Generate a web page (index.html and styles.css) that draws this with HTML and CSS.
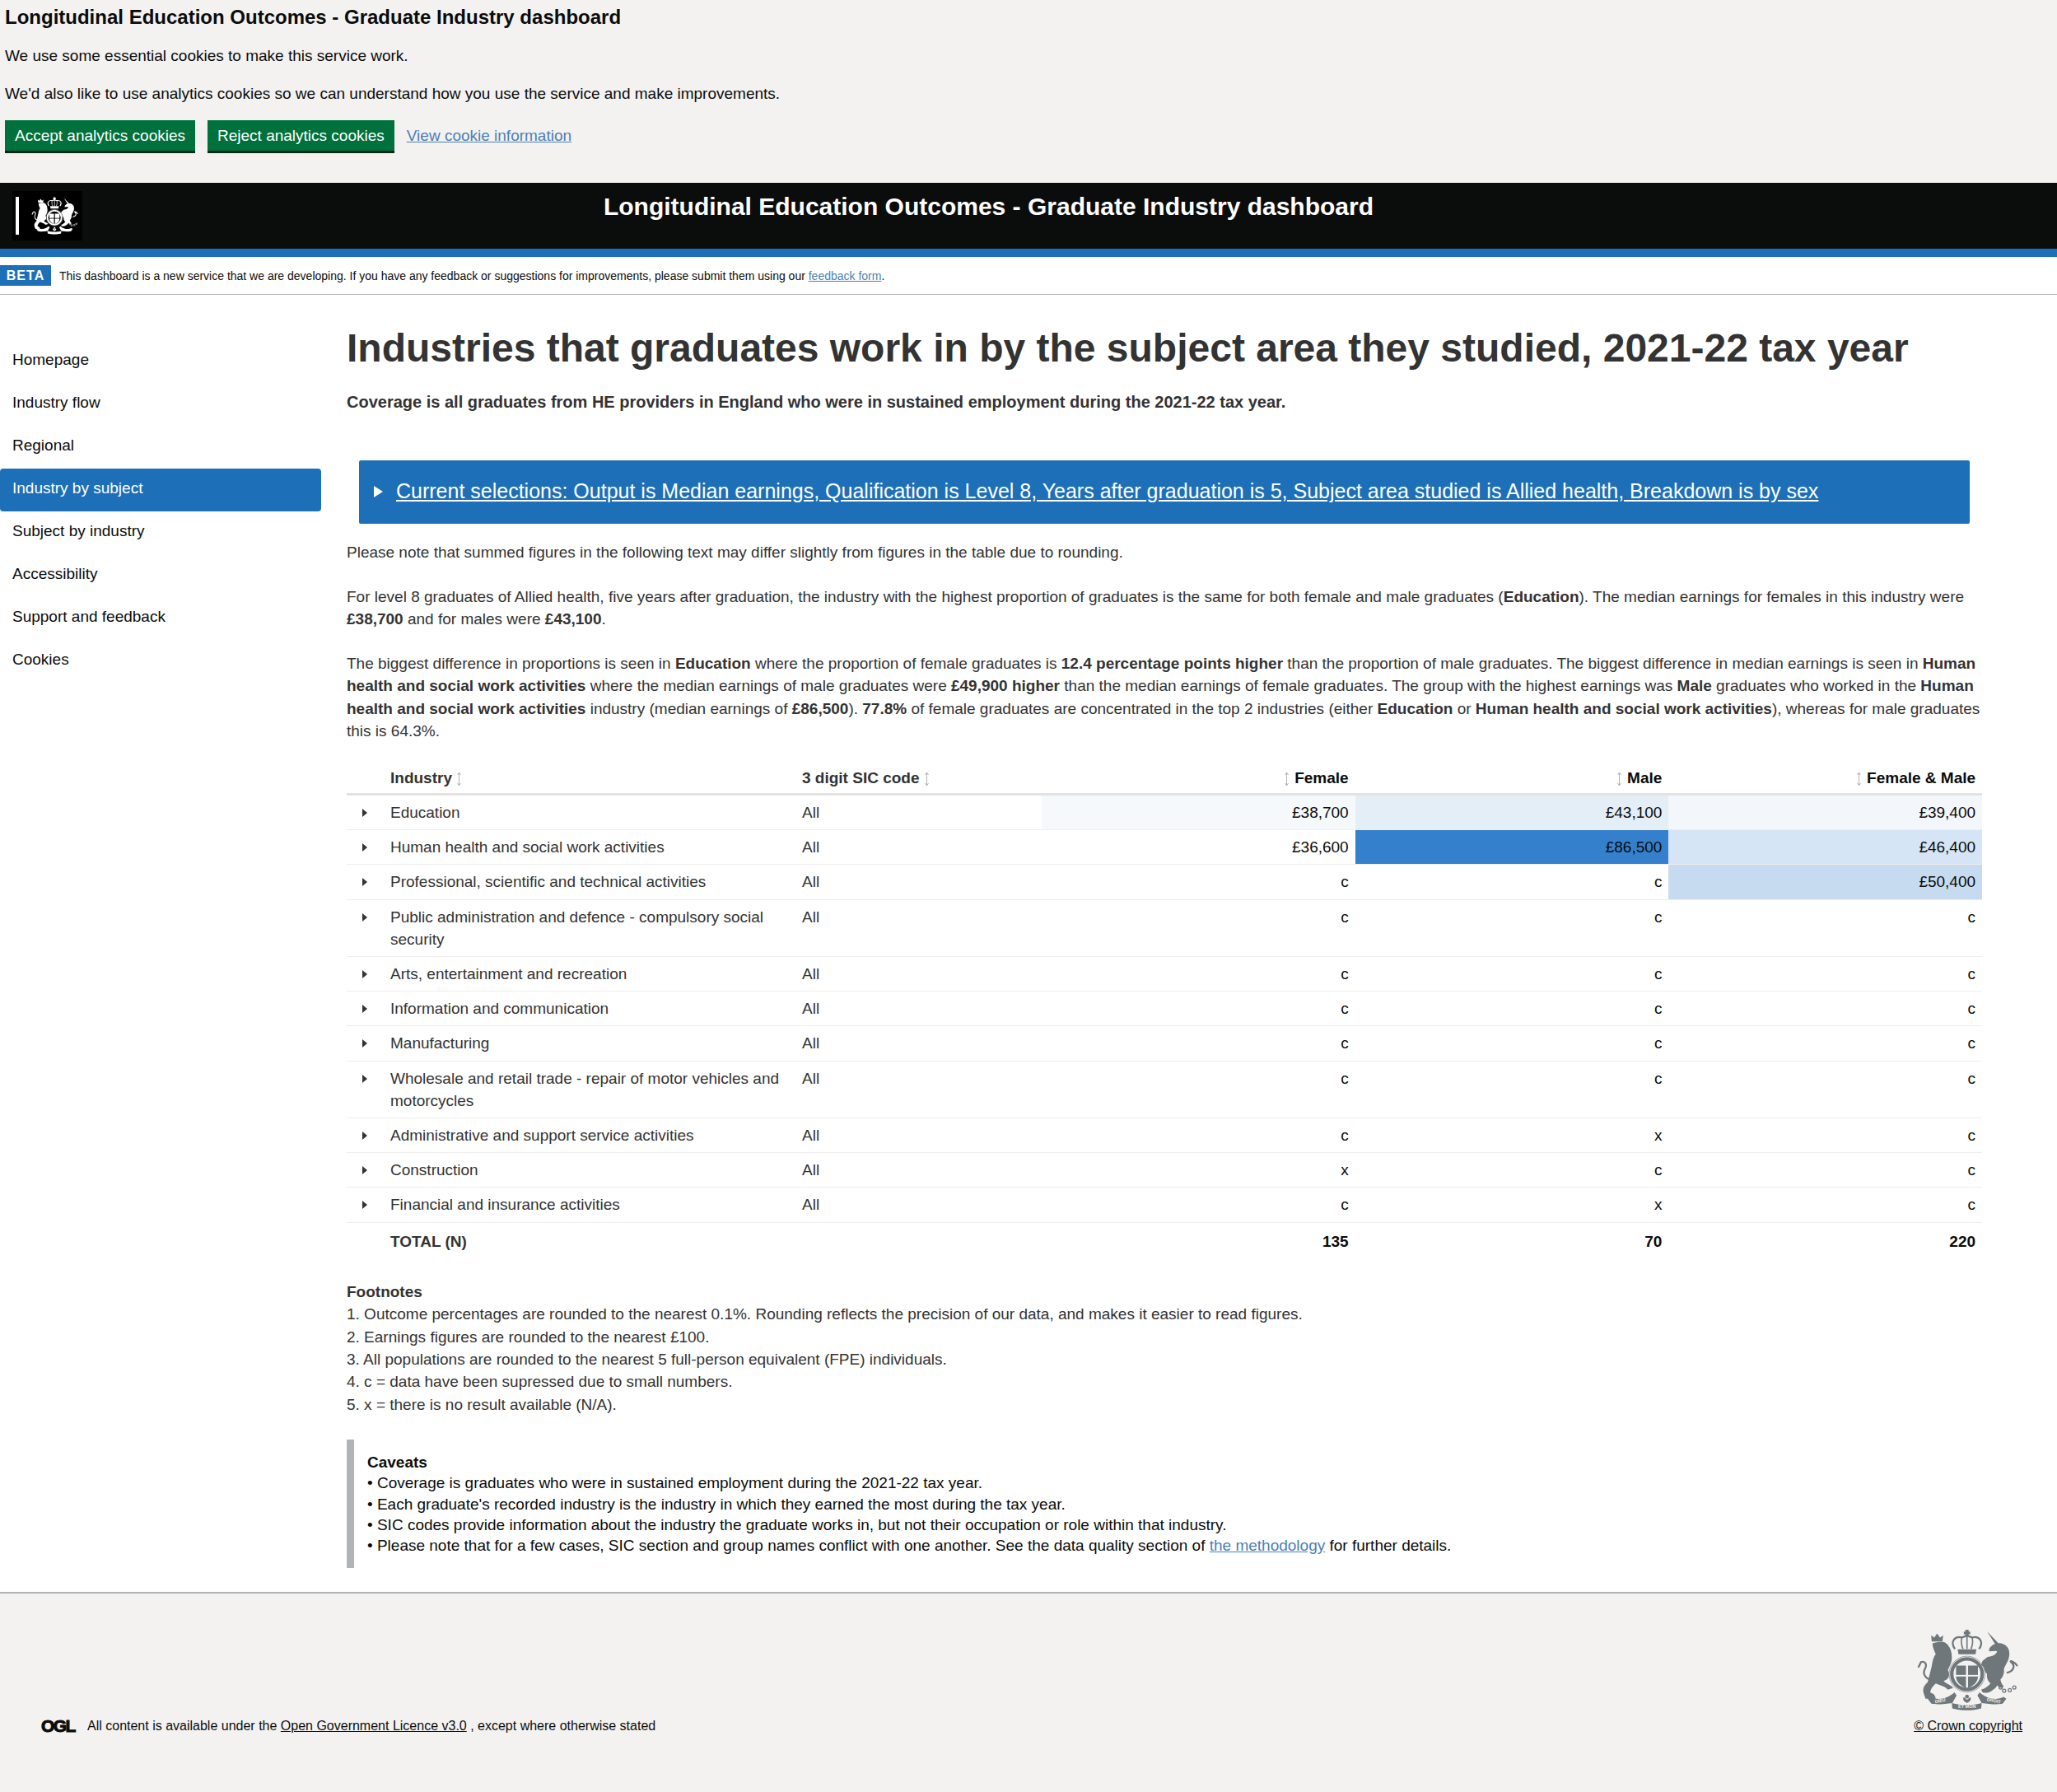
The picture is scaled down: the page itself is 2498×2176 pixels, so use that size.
FILE: index.html
```html
<!DOCTYPE html>
<html lang="en">
<head>
    <meta charset="UTF-8">
    <meta name="viewport" content="width=device-width, initial-scale=1.0">
    <title>Longitudinal Education Outcomes - Graduate Industry dashboard</title>
    <link rel="stylesheet" href="styles.css">
</head>
<body>
    <svg class="defs" width="0" height="0" aria-hidden="true">
        <symbol id="crest" viewBox="230 125 385 320">
            <g fill="currentColor">
                <path d="M285 178 L283 155 L295 163 L305 148 L316 163 L328 155 L325 178 Z"/>
                <path d="M288 185 C300 180 320 178 332 180 C350 190 362 210 360 245 C358 262 350 275 345 285 C355 300 350 320 330 325 C335 335 360 340 365 352 L345 358 C335 345 315 342 300 335 C290 345 280 355 280 370 C290 372 298 378 300 392 L262 392 L255 372 C250 355 255 345 270 330 C275 310 280 290 285 270 C288 250 292 235 300 225 C295 215 288 200 288 185 Z"/>
                <path d="M492 140 L535 185 L525 192 Z"/>
                <path d="M500 205 C510 190 525 182 545 185 C565 190 578 205 575 230 C573 250 562 262 555 280 C558 300 548 320 530 330 C535 345 520 355 510 362 C500 370 485 372 475 368 L470 358 C485 355 495 345 505 335 C495 325 490 315 492 300 C486 295 482 285 480 275 L470 265 L475 250 L495 235 C510 235 525 228 530 215 C520 212 510 215 500 215 Z"/>
                <path d="M530 300 C545 310 540 335 555 345 L545 352 C525 345 520 325 515 315 Z"/>
                <rect x="411" y="134" width="12" height="26"/>
                <rect x="405" y="141" width="24" height="10"/>
                <path d="M382 207 H452 L449 226 H385 Z"/>
                <path d="M376 268 H413 V303 H376 Z"/>
                <path d="M421 268 H458 V303 H421 Z"/>
                <path d="M376 309 H413 V352 C395 345 376 330 376 309 Z"/>
                <path d="M421 309 H458 C458 330 440 345 421 352 Z"/>
                <path d="M270 392 L280 385 C305 398 340 395 370 368 L378 380 L362 408 C335 412 300 415 283 410 Z"/>
                <path d="M564 392 L554 385 C529 398 494 395 464 368 L456 380 L472 408 C499 412 534 415 551 410 Z"/>
                <path d="M360 408 C395 418 440 418 472 408 L470 428 C440 438 395 438 362 428 Z"/>
                <circle cx="417" cy="384" r="7"/>
                <path d="M405 386 C398 396 408 404 417 408 C426 404 436 396 429 386 L417 396 Z"/>
            </g>
            <g fill="none" stroke="currentColor">
                <circle cx="417" cy="300" r="57" stroke-width="13"/>
                <circle cx="417" cy="300" r="67" stroke-width="2"/>
                <path d="M372 206 C352 178 372 156 398 163 L417 156 L436 163 C462 156 482 178 462 206" stroke-width="7"/>
                <path d="M398 163 C394 178 396 192 402 206 M436 163 C440 178 438 192 432 206 M417 156 V206" stroke-width="5"/>
                <path d="M285 320 C265 320 248 300 260 280 C268 265 262 250 245 255 L235 275" stroke-width="7"/>
                <path d="M565 295 C590 290 600 270 582 255 C574 248 590 250 606 270" stroke-width="7"/>
                <circle cx="543" cy="350" r="6" stroke-width="4"/>
                <circle cx="556" cy="362" r="6" stroke-width="4"/>
                <circle cx="577" cy="360" r="6" stroke-width="4"/>
                <circle cx="594" cy="350" r="6" stroke-width="4"/>
            </g>
        </symbol>
        <symbol id="sort" viewBox="0 0 6 18">
            <path d="M2.5 1 V17 M0.5 4 L2.5 1 L4.5 4 M0.5 14 L2.5 17 L4.5 14" fill="none" stroke="currentColor" stroke-width="1"/>
        </symbol>
    </svg>

    <div class="cookie-banner">
        <h2>Longitudinal Education Outcomes - Graduate Industry dashboard</h2>
        <p>We use some essential cookies to make this service work.</p>
        <p>We'd also like to use analytics cookies so we can understand how you use the service and make improvements.</p>
        <div class="cookie-actions">
            <button>Accept analytics cookies</button>
            <button>Reject analytics cookies</button>
            <a href="#">View cookie information</a>
        </div>
    </div>

    <header class="site-header">
        <div class="logo">
            <span class="logo-bar"></span>
            <svg class="logo-crest"><use href="#crest"/></svg>
        </div>
        <div class="site-title">Longitudinal Education Outcomes - Graduate Industry dashboard</div>
    </header>

    <div class="beta-bar">
        <strong class="beta-tag">BETA</strong>
        <span>This dashboard is a new service that we are developing. If you have any feedback or suggestions for improvements, please submit them using our <a href="#">feedback form</a>.</span>
    </div>

    <div class="page">
        <nav class="side-nav">
            <a href="#">Homepage</a>
            <a href="#">Industry flow</a>
            <a href="#">Regional</a>
            <a href="#" class="active">Industry by subject</a>
            <a href="#">Subject by industry</a>
            <a href="#">Accessibility</a>
            <a href="#">Support and feedback</a>
            <a href="#">Cookies</a>
        </nav>

        <main class="content">
            <h1>Industries that graduates work in by the subject area they studied, 2021-22 tax year</h1>
            <p class="coverage">Coverage is all graduates from HE providers in England who were in sustained employment during the 2021-22 tax year.</p>

            <div class="selections">
                <span class="selections-arrow"></span>
                <a href="#">Current selections: Output is Median earnings, Qualification is Level 8, Years after graduation is 5, Subject area studied is Allied health, Breakdown is by sex</a>
            </div>

            <p class="note">Please note that summed figures in the following text may differ slightly from figures in the table due to rounding.</p>
            <p class="note">For level 8 graduates of Allied health, five years after graduation, the industry with the highest proportion of graduates is the same for both female and male graduates (<b>Education</b>). The median earnings for females in this industry were <b>£38,700</b> and for males were <b>£43,100</b>.</p>
            <p class="note">The biggest difference in proportions is seen in <b>Education</b> where the proportion of female graduates is <b>12.4 percentage points higher</b> than the proportion of male graduates. The biggest difference in median earnings is seen in <b>Human health and social work activities</b> where the median earnings of male graduates were <b>£49,900 higher</b> than the median earnings of female graduates. The group with the highest earnings was <b>Male</b> graduates who worked in the <b>Human health and social work activities</b> industry (median earnings of <b>£86,500</b>). <b>77.8%</b> of female graduates are concentrated in the top 2 industries (either <b>Education</b> or <b>Human health and social work activities</b>), whereas for male graduates this is 64.3%.</p>

            <table class="data-table">
                <colgroup>
                    <col class="col-expand"><col class="col-industry"><col class="col-sic"><col class="col-num"><col class="col-num"><col class="col-num">
                </colgroup>
                <thead>
                    <tr>
                        <th></th>
                        <th>Industry <svg class="sort"><use href="#sort"/></svg></th>
                        <th>3 digit SIC code <svg class="sort"><use href="#sort"/></svg></th>
                        <th class="num"><svg class="sort"><use href="#sort"/></svg> Female</th>
                        <th class="num"><svg class="sort"><use href="#sort"/></svg> Male</th>
                        <th class="num"><svg class="sort"><use href="#sort"/></svg> Female &amp; Male</th>
                    </tr>
                </thead>
                <tbody>
                    <tr><td class="expander"><i></i></td><td>Education</td><td>All</td><td class="num" style="background:#f5f9fc">£38,700</td><td class="num" style="background:#e4eef7">£43,100</td><td class="num" style="background:#f3f7fc">£39,400</td></tr>
                    <tr><td class="expander"><i></i></td><td>Human health and social work activities</td><td>All</td><td class="num">£36,600</td><td class="num" style="background:#3580cd">£86,500</td><td class="num" style="background:#d6e5f5">£46,400</td></tr>
                    <tr><td class="expander"><i></i></td><td>Professional, scientific and technical activities</td><td>All</td><td class="num">c</td><td class="num">c</td><td class="num" style="background:#c6daf0">£50,400</td></tr>
                    <tr><td class="expander"><i></i></td><td>Public administration and defence - compulsory social security</td><td>All</td><td class="num">c</td><td class="num">c</td><td class="num">c</td></tr>
                    <tr><td class="expander"><i></i></td><td>Arts, entertainment and recreation</td><td>All</td><td class="num">c</td><td class="num">c</td><td class="num">c</td></tr>
                    <tr><td class="expander"><i></i></td><td>Information and communication</td><td>All</td><td class="num">c</td><td class="num">c</td><td class="num">c</td></tr>
                    <tr><td class="expander"><i></i></td><td>Manufacturing</td><td>All</td><td class="num">c</td><td class="num">c</td><td class="num">c</td></tr>
                    <tr><td class="expander"><i></i></td><td>Wholesale and retail trade - repair of motor vehicles and motorcycles</td><td>All</td><td class="num">c</td><td class="num">c</td><td class="num">c</td></tr>
                    <tr><td class="expander"><i></i></td><td>Administrative and support service activities</td><td>All</td><td class="num">c</td><td class="num">x</td><td class="num">c</td></tr>
                    <tr><td class="expander"><i></i></td><td>Construction</td><td>All</td><td class="num">x</td><td class="num">c</td><td class="num">c</td></tr>
                    <tr><td class="expander"><i></i></td><td>Financial and insurance activities</td><td>All</td><td class="num">c</td><td class="num">x</td><td class="num">c</td></tr>
                </tbody>
                <tfoot>
                    <tr><td></td><td>TOTAL (N)</td><td></td><td class="num">135</td><td class="num">70</td><td class="num">220</td></tr>
                </tfoot>
            </table>

            <div class="footnotes">
                <b>Footnotes</b><br>
                1. Outcome percentages are rounded to the nearest 0.1%. Rounding reflects the precision of our data, and makes it easier to read figures.<br>
                2. Earnings figures are rounded to the nearest £100.<br>
                3. All populations are rounded to the nearest 5 full-person equivalent (FPE) individuals.<br>
                4. c = data have been supressed due to small numbers.<br>
                5. x = there is no result available (N/A).
            </div>

            <div class="caveats">
                <b>Caveats</b><br>
                • Coverage is graduates who were in sustained employment during the 2021-22 tax year.<br>
                • Each graduate's recorded industry is the industry in which they earned the most during the tax year.<br>
                • SIC codes provide information about the industry the graduate works in, but not their occupation or role within that industry.<br>
                • Please note that for a few cases, SIC section and group names conflict with one another. See the data quality section of <a href="#">the methodology</a> for further details.
            </div>
        </main>
    </div>

    <footer class="site-footer">
        <div class="licence">
            <span class="ogl">OGL</span>
            <span>All content is available under the <a href="#">Open Government Licence v3.0</a> , except where otherwise stated</span>
        </div>
        <div class="copyright">
            <svg class="footer-crest" viewBox="230 125 385 320">
                <use href="#crest" x="230" y="125" width="385" height="320"/>
                <text x="417" y="428" class="motto">ET MON</text>
                <text x="318" y="405" class="motto" transform="rotate(-12 318 405)">DIEU</text>
                <text x="516" y="405" class="motto" transform="rotate(12 516 405)">DROIT</text>
            </svg>
            <a href="#">© Crown copyright</a>
        </div>
    </footer>
</body>
</html>
```

FILE: styles.css
```css
* { box-sizing: border-box; }
body {
    margin: 0; font-family: "Liberation Sans", Arial, sans-serif; font-size: 19px; color: #0b0c0c; background-color: #ffffff;
}
a { color: #4c7fb5; }
.defs { position: absolute; }

/* cookie banner */
.cookie-banner { background-color: #f3f2f1; height: 222px; padding: 6px 6px 0; }
.cookie-banner h2 { margin: 0 0 19px; font-size: 24px; line-height: 30px; }
.cookie-banner p { margin: 0 0 20px; line-height: 26px; }
.cookie-actions { display: flex; align-items: center; gap: 15px; margin-top: -1px; }
.cookie-actions a { margin-bottom: 2px; }
.cookie-actions button {
    height: 40px; padding: 0 12px; background-color: #00703c; color: #ffffff; border: none; border-bottom: 3px solid #002d18;
    font-family: inherit; font-size: 19px;
}

/* header */
.site-header {
    display: flex; height: 90px; background-color: #0b0c0c; border-bottom: 10px solid #1d70b8; padding: 10px 197px 0 15px;
}
.logo { display: flex; align-items: center; width: 85px; height: 60px; background-color: #000000; padding-left: 4px; }
.logo-bar { width: 4px; height: 46px; background-color: #ffffff; }
.logo-crest { width: 60px; height: 48px; margin-left: 14px; color: #ffffff; }
.site-title { flex: 1; text-align: center; color: #ffffff; font-size: 30px; font-weight: bold; line-height: 37px; }

.beta-bar { display: flex; align-items: center; height: 46px; border-bottom: 1px solid #b1b4b6; font-size: 14px; }
.beta-tag { width: 62px; height: 25px; line-height: 25px; text-align: center; background-color: #1d70b8; color: #ffffff; font-size: 16px; letter-spacing: 1px; margin-right: 10px; }

/* page */
.page { display: flex; padding-bottom: 29px; }
.side-nav { width: 390px; margin: 55px 31px 0 0; flex-shrink: 0; }
.side-nav a { display: block; height: 52px; padding: 10px 15px 0; color: #0b0c0c; text-decoration: none; line-height: 27px; border-radius: 4px; }
.side-nav a.active { background-color: #1d70b8; color: #ffffff; }
.content { width: 1989px; padding-top: 35px; color: #333333; }
.content h1 { margin: 0 0 22px; font-size: 48px; line-height: 60px; }
.coverage { margin: 0 0 57px; font-size: 20px; font-weight: bold; line-height: 27px; }
.selections {
    display: flex; align-items: center; height: 77px; margin: 0 18px 21px 15px; padding: 0 0 2px 18px; background-color: #1d70b8;
    border-radius: 2px; font-size: 25px;
}
.selections a { color: #ffffff; margin-left: 16px; }
.selections-arrow { width: 0; height: 0; border-style: solid; border-width: 7px 0 7px 11px; border-color: transparent transparent transparent #ffffff; }
.note { margin: 0 0 26px; line-height: 27.5px; }

/* table */
.data-table { width: 1986px; margin-top: -1px; table-layout: fixed; border-collapse: collapse; }
.col-expand { width: 45px; }
.col-industry { width: 500px; }
.col-sic { width: 299px; }
.col-num { width: 380.7px; }
.data-table th { height: 38px; padding: 0 8px; text-align: left; font-weight: bold; border-bottom: 3px solid #e5e3e1; }
.data-table td { padding: 7px 8px; line-height: 27.2px; vertical-align: top; border-bottom: 1px solid #efeeed; }
.data-table .num { text-align: right; color: #0b0c0c; }
.data-table tfoot td { padding-top: 9px; border-bottom: none; font-weight: bold; }
.sort { width: 6px; height: 18px; margin: 0 1px; color: #b5b5ba; vertical-align: -4px; }
.expander i { display: block; width: 0; height: 0; margin: 9px 0 0 11px; border-style: solid; border-width: 5px 0 5px 6px; border-color: transparent transparent transparent #333333; }

.footnotes { margin-top: 27px; line-height: 27.4px; }
.caveats { margin-top: 29px; padding: 15px 0 15px 16px; border-left: 9px solid #b1b4b6; line-height: 25.2px; color: #0b0c0c; }

/* footer */
.site-footer {
    display: flex; justify-content: space-between; align-items: flex-end; height: 243px; padding: 0 42px 68px 50px;
    background-color: #f3f2f1; border-top: 2px solid #b1b4b6; font-size: 16px;
}
.site-footer a { color: #0b0c0c; }
.licence { display: flex; align-items: center; gap: 15px; }
.ogl { width: 41px; font-size: 21px; font-weight: bold; letter-spacing: -1.6px; -webkit-text-stroke: 1px #0b0c0c; }
.copyright { display: flex; flex-direction: column; align-items: center; margin-bottom: 3px; }
.footer-crest { width: 125px; height: 104px; color: #6f777b; margin-bottom: 7px; }
.motto { font-size: 17px; font-weight: bold; fill: #f3f2f1; text-anchor: middle; }
```
